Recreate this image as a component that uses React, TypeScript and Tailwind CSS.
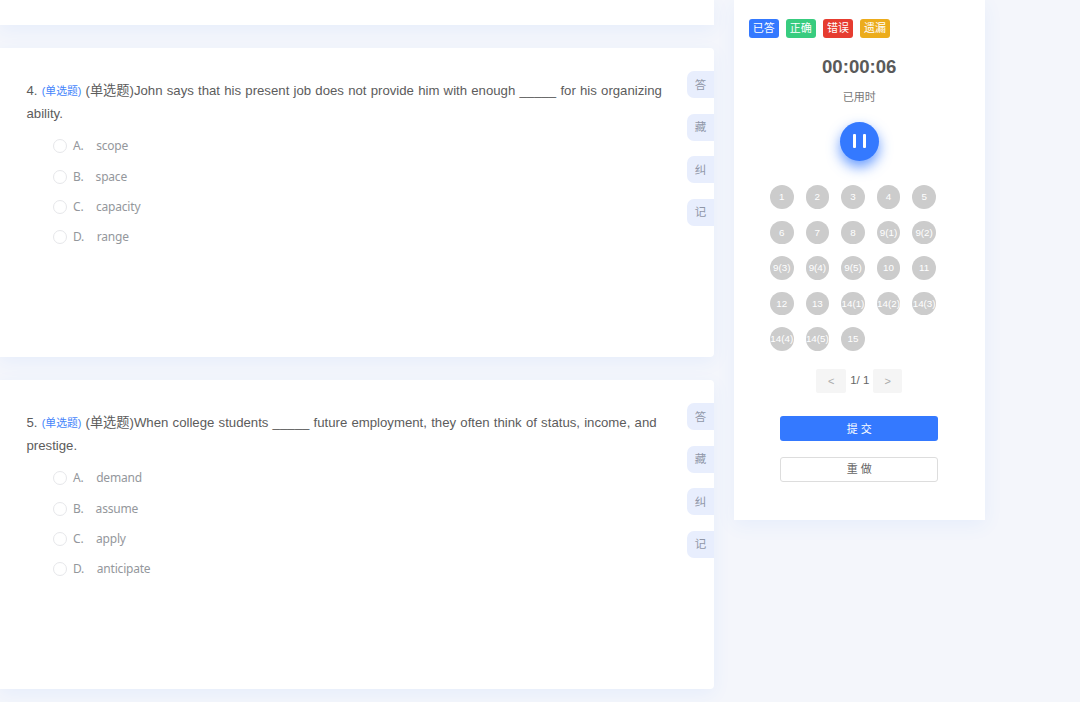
type Question = { no: number; stem: string; rest: string; options: { text: string; gap: string }[] };

const questions: Question[] = [
  {
    no: 4,
    stem: 'John says that his present job does not provide him with enough _____ for his organizing',
    rest: 'ability.',
    options: [
      { text: 'scope', gap: 'w-[23.2px]' },
      { text: 'space', gap: 'w-[22.6px]' },
      { text: 'capacity', gap: 'w-[23px]' },
      { text: 'range', gap: 'w-[23.8px]' },
    ],
  },
  {
    no: 5,
    stem: 'When college students _____ future employment, they often think of status, income, and',
    rest: 'prestige.',
    options: [
      { text: 'demand', gap: 'w-[23.2px]' },
      { text: 'assume', gap: 'w-[22.6px]' },
      { text: 'apply', gap: 'w-[23px]' },
      { text: 'anticipate', gap: 'w-[23.8px]' },
    ],
  },
];

const legend = [
  { label: '已答', color: 'bg-[#3479ff]' },
  { label: '正确', color: 'bg-[#38cc7f]' },
  { label: '错误', color: 'bg-[#e63c30]' },
  { label: '遗漏', color: 'bg-[#ecac1c]' },
];

const cells = [
  '1', '2', '3', '4', '5',
  '6', '7', '8', '9(1)', '9(2)',
  '9(3)', '9(4)', '9(5)', '10', '11',
  '12', '13', '14(1)', '14(2)', '14(3)',
  '14(4)', '14(5)', '15',
];

function QuestionCard({ q }: { q: Question }) {
  return (
    <section className="flex h-[309px] shrink-0 rounded-r-[4px] bg-white shadow-[0_5px_18px_rgba(52,121,255,0.07)]">
      <div className="flex-1 pl-[26.5px] pt-[31px]">
        <div className="whitespace-nowrap text-[13.2px] leading-[23px] text-[#5c5c5c] [word-spacing:0.55px]">
          <div className="h-[23.4px]">
            {q.no}. <span className="text-[10.8px] [word-spacing:0] text-[#4484fb]">(单选题)</span> (单选题){q.stem}
          </div>
          <div>{q.rest}</div>
        </div>
        <ul className="mt-[6px] pl-[26.5px] font-['Noto_Sans','Noto_Sans_CJK_SC',sans-serif] text-[12px] tracking-[-0.2px] text-[#94979c]">
          {q.options.map((o, i) => (
            <li key={o.text} className="flex h-[30.2px] items-center">
              <span className="mr-[6px] size-[14px] rounded-full border border-[#e6e7ea]" />
              <span className={o.gap}>{'ABCD'[i]}.</span>
              <span>{o.text}</span>
            </li>
          ))}
        </ul>
      </div>
      <div className="flex w-[27px] flex-col gap-[15.6px] pt-[23px]">
        {['答', '藏', '纠', '记'].map((t) => (
          <button key={t} className="h-[27px] w-[27px] rounded-l-[7px] bg-[#e8eefd] text-[11.5px] leading-[26px] text-[#9097a8]">
            {t}
          </button>
        ))}
      </div>
    </section>
  );
}

export default function App() {
  return (
    <div className="flex h-[702px] w-[1080px] items-start overflow-hidden bg-[#f4f6fb] font-['Liberation_Sans','Noto_Sans_CJK_SC',sans-serif]">
      <main className="flex w-[714px] flex-col gap-[23px]">
        <section className="h-[25px] shrink-0 bg-white shadow-[0_5px_18px_rgba(52,121,255,0.07)]" />
        {questions.map((q) => (
          <QuestionCard key={q.no} q={q} />
        ))}
      </main>
      <aside className="ml-[20px] flex h-[520px] w-[250.5px] flex-col items-center bg-white shadow-[0_5px_18px_rgba(52,121,255,0.07)]">
        <div className="flex gap-[7.6px] self-start pl-[15px] pt-[18.5px]">
          {legend.map((l) => (
            <span key={l.label} className={`h-[19px] w-[29.5px] rounded-[3px] text-center text-[11px] leading-[18px] text-white ${l.color}`}>
              {l.label}
            </span>
          ))}
        </div>
        <div className="mt-[15px] h-[28px] text-[18.6px] leading-[28px] font-bold text-[#5a5a5a]">00:00:06</div>
        <div className="mt-[8px] h-[16px] text-[11px] leading-[16px] text-[#777]">已用时</div>
        <button className="mt-[17px] flex size-[39px] shrink-0 items-center justify-center gap-[7px] rounded-full bg-[#3479ff] shadow-[0_6px_13px_rgba(52,121,255,0.75)]">
          <span className="h-[14px] w-[3px] rounded-[1px] bg-white" />
          <span className="h-[14px] w-[3px] rounded-[1px] bg-white" />
        </button>
        <div className="mt-[24.5px] grid grid-cols-5 gap-x-[12.1px] gap-y-[12.1px] self-start pl-[36px]">
          {cells.map((c) => (
            <span key={c} className="flex size-[23.5px] items-center justify-center whitespace-nowrap rounded-full bg-[#ccc] pt-px text-[9.8px] text-white">
              {c}
            </span>
          ))}
        </div>
        <div className="mt-[18px] flex h-[24px] items-center text-[11px] text-[#666]">
          <span className="flex h-[24px] w-[30px] items-center justify-center rounded-[2px] bg-[#f5f5f5] text-[#aaa]">&lt;</span>
          <span className="w-[27px] text-center text-[11.5px]">1/ 1</span>
          <span className="flex h-[24px] w-[29px] items-center justify-center rounded-[2px] bg-[#f5f5f5] text-[#aaa]">&gt;</span>
        </div>
        <button className="mt-[23.5px] h-[25px] w-[158px] shrink-0 rounded-[3px] bg-[#3479ff] pt-px text-[11px] leading-[25px] text-white">提 交</button>
        <button className="mt-[15.5px] h-[25px] w-[158px] shrink-0 rounded-[3px] border border-[#ddd] text-[11px] leading-[23px] text-[#666]">重 做</button>
      </aside>
    </div>
  );
}
